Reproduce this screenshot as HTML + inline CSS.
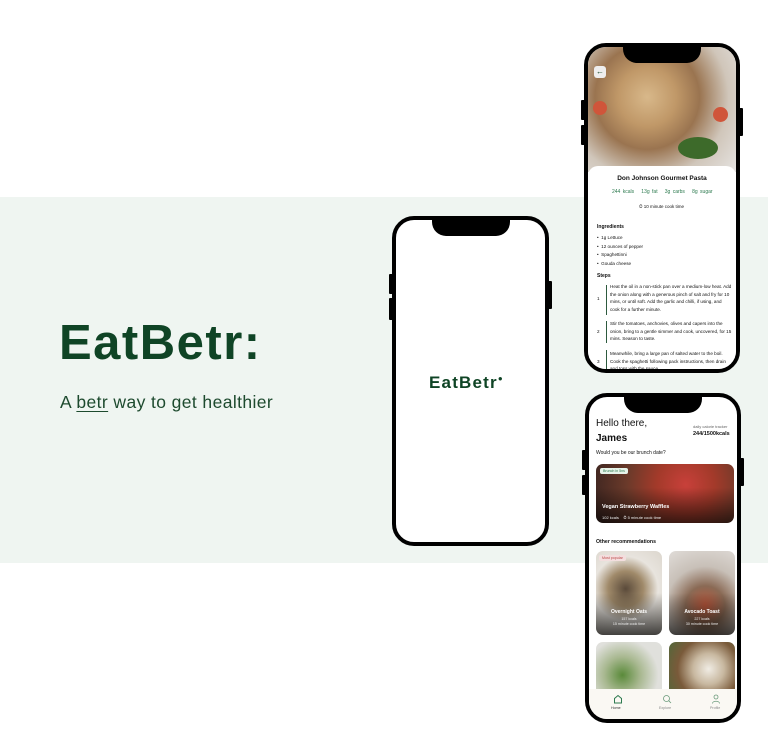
<!DOCTYPE html>
<html><head><meta charset="utf-8"><style>
*{margin:0;padding:0;box-sizing:border-box}
body{width:768px;height:742px;background:#fff;position:relative;overflow:hidden;font-family:"Liberation Sans",sans-serif;color:#111}
.band{position:absolute;left:0;top:197px;width:768px;height:366px;background:#eff5f1}
.title{position:absolute;left:59px;top:315px;font-size:49px;color:#0f4425;letter-spacing:1.5px;font-weight:bold}
.sub{position:absolute;left:60px;top:392px;font-size:17.5px;color:#1d4a2e;letter-spacing:.4px}
.sub u{text-decoration-thickness:1px;text-underline-offset:3px}
.phone{position:absolute;border:4px solid #000;border-radius:22px;background:#fff;overflow:hidden}
.notch{position:absolute;left:50%;transform:translateX(-50%);top:-1px;width:78px;height:17px;background:#000;border-radius:0 0 14px 14px;z-index:5}
.btn{position:absolute;background:#000;width:4px;border-radius:1px}
.s{position:absolute;white-space:nowrap}
</style></head><body>
<div class="band"></div>
<div class="title">EatBetr:</div>
<div class="sub">A <u>betr</u> way to get healthier</div>

<div class="btn" style="left:389px;top:274px;height:20px"></div>
<div class="btn" style="left:389px;top:298px;height:22px"></div>
<div class="btn" style="left:548px;top:281px;height:28px"></div>
<div class="phone" style="left:392px;top:216px;width:157px;height:330px">
<div class="notch"></div>
<div class="s" style="left:33px;top:153px;font-size:17px;font-weight:bold;color:#0f4425;letter-spacing:1.2px">EatBetr<span style="font-size:8px;vertical-align:7px">●</span></div>
</div>

<div class="btn" style="left:581px;top:100px;height:20px"></div>
<div class="btn" style="left:581px;top:125px;height:20px"></div>
<div class="btn" style="left:739px;top:108px;height:28px"></div>
<div class="phone" style="left:584px;top:43px;width:156px;height:330px">
<div class="notch"></div>
<div style="position:absolute;left:0;top:0;width:148px;height:125px;background:radial-gradient(circle at 40% 40%,#d8b88a 0,#c09868 25%,#9a7450 45%,#d0c6ba 70%,#e6e4e2 100%)"></div>
<div style="position:absolute;left:5px;top:54px;width:14px;height:14px;border-radius:50%;background:#d0553a"></div>
<div style="position:absolute;left:125px;top:60px;width:15px;height:15px;border-radius:50%;background:#d0553a"></div>
<div style="position:absolute;left:90px;top:90px;width:40px;height:22px;border-radius:50%;background:#3d6a2a"></div>
<div style="position:absolute;left:6px;top:19px;width:12px;height:12px;background:#eee;border-radius:3px;font-size:8px;color:#0f4425;text-align:center;line-height:12px">←</div>
<div style="position:absolute;left:0;top:119px;width:148px;height:220px;background:#fff;border-radius:10px 10px 0 0"></div>
<div class="s" style="left:0;width:148px;text-align:center;top:128px;font-size:6.5px;font-weight:bold">Don Johnson Gourmet Pasta</div>
<div class="s" style="left:24px;top:142px;font-size:5px;color:#2d7a4f;word-spacing:1px">244 kcals &nbsp; 13g fat &nbsp; 3g carbs &nbsp; 8g sugar</div>
<div class="s" style="left:51px;top:157px;font-size:4.5px">⏱ 10 minute cook time</div>
<div class="s" style="left:9px;top:177px;font-size:5px;font-weight:bold">Ingredients</div>
<div class="s" style="left:9px;top:187px;font-size:4.6px;line-height:8.6px">•&nbsp; 1g Lettuce<br>•&nbsp; 12 ounces of pepper<br>•&nbsp; Spaghettinni<br>•&nbsp; Gouda cheese</div>
<div class="s" style="left:9px;top:226px;font-size:5px;font-weight:bold">Steps</div>
<div style="position:absolute;left:18px;top:238px;width:1px;height:30px;background:#2d5a3e"></div>
<div style="position:absolute;left:18px;top:274px;width:1px;height:22px;background:#2d5a3e"></div>
<div style="position:absolute;left:18px;top:303px;width:1px;height:30px;background:#2d5a3e"></div>
<div class="s" style="left:9px;top:249px;font-size:4.6px">1</div>
<div class="s" style="left:9px;top:282px;font-size:4.6px">2</div>
<div class="s" style="left:9px;top:312px;font-size:4.6px">3</div>
<div style="position:absolute;left:22px;top:236px;width:122px;font-size:4.6px;line-height:7.6px">Heat the oil in a non-stick pan over a medium-low heat. Add the onion along with a generous pinch of salt and fry for 10 mins, or until soft. Add the garlic and chilli, if using, and cook for a further minute.</div>
<div style="position:absolute;left:22px;top:273px;width:122px;font-size:4.6px;line-height:7.6px">Stir the tomatoes, anchovies, olives and capers into the onion, bring to a gentle simmer and cook, uncovered, for 15 mins. Season to taste.</div>
<div style="position:absolute;left:22px;top:303px;width:122px;font-size:4.6px;line-height:7.6px">Meanwhile, bring a large pan of salted water to the boil. Cook the spaghetti following pack instructions, then drain and toss with the sauce.</div>
</div>

<div class="btn" style="left:582px;top:450px;height:20px"></div>
<div class="btn" style="left:582px;top:475px;height:20px"></div>
<div class="btn" style="left:740px;top:458px;height:28px"></div>
<div class="phone" style="left:585px;top:393px;width:156px;height:330px">
<div class="notch"></div>
<div class="s" style="left:7px;top:21px;font-size:10px">Hello there,</div>
<div class="s" style="left:7px;top:36px;font-size:10px;font-weight:bold">James</div>
<div class="s" style="left:104px;top:27px;font-size:4px;color:#666">daily calorie tracker</div>
<div class="s" style="left:104px;top:34px;font-size:5.5px;font-weight:bold">244/1500kcals</div>
<div class="s" style="left:7px;top:53px;font-size:5px">Would you be our brunch date?</div>
<div style="position:absolute;left:7px;top:67px;width:138px;height:59px;border-radius:7px;background:linear-gradient(180deg,rgba(0,0,0,0) 40%,rgba(0,0,0,.6)),radial-gradient(circle at 65% 35%,#c8403a 0,#a33a2a 30%,#6b3a2a 60%,#3a2420 100%)"></div>
<div class="s" style="left:11px;top:71px;font-size:3.6px;background:#e6f3e9;color:#2d7a4f;padding:1px 3px;border-radius:2px">Brunch in 5ns</div>
<div class="s" style="left:13px;top:107px;font-size:5.5px;font-weight:bold;color:#fff">Vegan Strawberry Waffles</div>
<div class="s" style="left:13px;top:118px;font-size:4px;color:#eee">102 kcals &nbsp;&nbsp; ⏱ 5 minute cook time</div>
<div class="s" style="left:7px;top:142px;font-size:5.2px;font-weight:bold">Other recommendations</div>
<div style="position:absolute;left:7px;top:154px;width:66px;height:84px;border-radius:7px;background:linear-gradient(180deg,rgba(0,0,0,0) 50%,rgba(0,0,0,.7)),radial-gradient(circle at 45% 45%,#5a4a3a 0,#a08a6a 30%,#e8e4de 55%,#d8d2c8 100%)"></div>
<div class="s" style="left:10px;top:158px;font-size:3.6px;background:#f3dede;color:#b44;padding:1px 3px;border-radius:2px">Most popular</div>
<div class="s" style="left:7px;width:66px;text-align:center;top:212px;font-size:5px;font-weight:bold;color:#fff">Overnight Oats</div>
<div class="s" style="left:7px;width:66px;text-align:center;top:220px;font-size:3.6px;color:#eee;line-height:5px">157 kcals<br>15 minute cook time</div>
<div style="position:absolute;left:80px;top:154px;width:66px;height:84px;border-radius:7px;background:linear-gradient(180deg,rgba(0,0,0,0) 50%,rgba(0,0,0,.7)),radial-gradient(circle at 55% 65%,#b8553a 0,#8a6a55 30%,#c8c0b8 60%,#e0dcd8 100%)"></div>
<div class="s" style="left:80px;width:66px;text-align:center;top:212px;font-size:5px;font-weight:bold;color:#fff">Avocado Toast</div>
<div class="s" style="left:80px;width:66px;text-align:center;top:220px;font-size:3.6px;color:#eee;line-height:5px">227 kcals<br>30 minute cook time</div>
<div style="position:absolute;left:7px;top:245px;width:66px;height:60px;border-radius:7px 7px 0 0;background:radial-gradient(circle at 40% 55%,#5a8a3a 0,#a8b890 35%,#e0e0dc 70%)"></div>
<div style="position:absolute;left:80px;top:245px;width:66px;height:60px;border-radius:7px 7px 0 0;background:radial-gradient(circle at 60% 45%,#f0ece4 0,#c8b8a0 30%,#7a5a3a 60%,#4a6a3a 100%)"></div>
<div style="position:absolute;left:0;top:292px;width:148px;height:40px;background:#faf8f3"></div>
<svg style="position:absolute;left:24px;top:297px" width="10" height="10" viewBox="0 0 10 10"><path d="M1.5 9V4.5L5 1.5 8.5 4.5V9Z" fill="none" stroke="#2d7a4f" stroke-width="1"/></svg>
<svg style="position:absolute;left:73px;top:297px" width="10" height="10" viewBox="0 0 10 10"><circle cx="4.5" cy="4.5" r="3" fill="none" stroke="#6a9a7a" stroke-width=".8"/><path d="M6.8 6.8 9 9" stroke="#6a9a7a" stroke-width=".8"/></svg>
<svg style="position:absolute;left:122px;top:297px" width="10" height="10" viewBox="0 0 10 10"><circle cx="5" cy="3" r="2" fill="none" stroke="#6a9a7a" stroke-width=".8"/><path d="M1.5 9.5C1.5 6.5 8.5 6.5 8.5 9.5" fill="none" stroke="#6a9a7a" stroke-width=".8"/></svg>
<div class="s" style="left:22px;top:309px;font-size:3.6px;color:#333">Home</div>
<div class="s" style="left:70px;top:309px;font-size:3.6px;color:#888">Explore</div>
<div class="s" style="left:121px;top:309px;font-size:3.6px;color:#888">Profile</div>
</div>
</body></html>
